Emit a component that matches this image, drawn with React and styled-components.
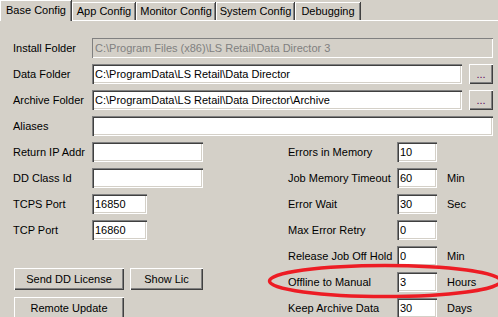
import React from "react";
import styled, { createGlobalStyle } from "styled-components";

const TABS = [
  { id: "base", name: "Base Config", width: 71, active: true },
  { id: "app", name: "App Config", width: 63 },
  { id: "monitor", name: "Monitor Config", width: 79 },
  { id: "system", name: "System Config", width: 78 },
  { id: "debug", name: "Debugging", width: 65 },
];

const FOLDERS = [
  { id: "install", label: "Install Folder", value: "C:\\Program Files (x86)\\LS Retail\\Data Director 3", disabled: true },
  { id: "data", label: "Data Folder", value: "C:\\ProgramData\\LS Retail\\Data Director", browse: true },
  { id: "archive", label: "Archive Folder", value: "C:\\ProgramData\\LS Retail\\Data Director\\Archive", browse: true },
  { id: "aliases", label: "Aliases", value: "" },
];

const LEFT_FIELDS = [
  { id: "ip", label: "Return IP Addr", value: "", width: 111 },
  { id: "class", label: "DD Class Id", value: "", width: 111 },
  { id: "tcps", label: "TCPS Port", value: "16850", width: 55 },
  { id: "tcp", label: "TCP Port", value: "16860", width: 55 },
];

const RIGHT_FIELDS = [
  { id: "errors", label: "Errors in Memory", value: "10" },
  { id: "timeout", label: "Job Memory Timeout", value: "60", unit: "Min" },
  { id: "wait", label: "Error Wait", value: "30", unit: "Sec" },
  { id: "retry", label: "Max Error Retry", value: "0" },
  { id: "release", label: "Release Job Off Hold", value: "0", unit: "Min" },
  { id: "offline", label: "Offline to Manual", value: "3", unit: "Hours", marked: true },
  { id: "keep", label: "Keep Archive Data", value: "30", unit: "Days" },
];

export default function App() {
  return (
    <>
      <GlobalStyle />
      <Window>
        <TabStrip>
          {TABS.map((tab) => (
            <Tab key={tab.id} $active={tab.active} $width={tab.width}>
              {tab.name}
            </Tab>
          ))}
          <TabFiller />
        </TabStrip>

        <Panel>
          <FolderList>
            {FOLDERS.map((f) => (
              <FolderRow key={f.id}>
                <Label>{f.label}</Label>
                <TextBox
                  value={f.value}
                  readOnly
                  disabled={f.disabled}
                  $span={!f.browse}
                />
                {f.browse && <BrowseButton>...</BrowseButton>}
              </FolderRow>
            ))}
          </FolderList>

          <Columns>
            <LeftColumn>
              {LEFT_FIELDS.map((f) => (
                <FieldRow key={f.id}>
                  <Label>{f.label}</Label>
                  <TextBox value={f.value} readOnly $width={f.width} />
                </FieldRow>
              ))}
              <ButtonGrid>
                <PushButton $width={110}>Send DD License</PushButton>
                <PushButton $width={73}>Show Lic</PushButton>
                <PushButton $width={110}>Remote Update</PushButton>
              </ButtonGrid>
            </LeftColumn>

            <RightColumn>
              {RIGHT_FIELDS.map((f) => (
                <SettingRow key={f.id}>
                  <Label>{f.label}</Label>
                  <TextBox value={f.value} readOnly $width={40} />
                  <Unit>{f.unit}</Unit>
                  {f.marked && (
                    <Marker viewBox="0 0 236 36">
                      <ellipse cx="118" cy="18" rx="115.5" ry="15.5" />
                    </Marker>
                  )}
                </SettingRow>
              ))}
            </RightColumn>
          </Columns>
        </Panel>
      </Window>
    </>
  );
}

const GlobalStyle = createGlobalStyle`
  html, body {
    margin: 0;
    background: #d4d0c8;
    overflow: hidden;
  }
  body {
    font-family: "Liberation Sans", Arial, sans-serif;
    font-size: 11px;
    color: #000;
  }
`;

const Window = styled.div`
  width: 498px;
  height: 317px;
  background: #d4d0c8;
  overflow: hidden;
`;

const TabStrip = styled.div`
  display: flex;
  align-items: flex-end;
  height: 21px;
`;

const Tab = styled.div`
  box-sizing: border-box;
  width: ${(p) => p.$width}px;
  height: ${(p) => (p.$active ? 21 : 18)}px;
  margin-bottom: ${(p) => (p.$active ? 0 : 1)}px;
  padding-top: ${(p) => (p.$active ? 3 : 2)}px;
  text-align: center;
  background: #d4d0c8;
  border-top: 1px solid #fff;
  border-left: 1px solid #fff;
  box-shadow: inset -1px 0 #808080, 1px 0 #404040;
  white-space: nowrap;
  position: relative;
  ${(p) =>
    !p.$active &&
    `&::after {
      content: "";
      position: absolute;
      left: -1px;
      right: -1px;
      bottom: -1px;
      height: 1px;
      background: #fff;
    }`}
  & + & {
    margin-left: 1px;
  }
`;

const TabFiller = styled.div`
  flex: 1;
  height: 1px;
  background: #fff;
`;

const Panel = styled.div`
  padding: 17px 5px 0 13px;
  display: flex;
  flex-direction: column;
  gap: 6px;
`;

const FolderList = styled.div`
  display: flex;
  flex-direction: column;
  gap: 6px;
`;

const FolderRow = styled.div`
  display: grid;
  grid-template-columns: 79px 1fr auto;
  height: 20px;
  align-items: center;
`;

const Label = styled.span`
  white-space: nowrap;
`;

const TextBox = styled.input`
  box-sizing: border-box;
  height: 20px;
  width: ${(p) => (p.$width ? `${p.$width}px` : "100%")};
  ${(p) => p.$span && "grid-column: 2 / 4;"}
  margin: 0;
  padding: 0 3px;
  border: none;
  outline: none;
  font: inherit;
  color: #000;
  background: #fff;
  box-shadow: inset 1px 1px #808080, inset 2px 2px #404040,
    inset -1px -1px #fff, inset -2px -2px #d4d0c8;

  &:disabled {
    background: #d4d0c8;
    color: #808080;
    box-shadow: inset 1px 1px #808080, inset -1px -1px #fff;
  }
`;

const ButtonBase = styled.button`
  box-sizing: border-box;
  margin: 0;
  padding: 0;
  border: none;
  font: inherit;
  color: #000;
  background: #d4d0c8;
  box-shadow: inset 1px 1px #fff, inset -1px -1px #404040,
    inset -2px -2px #808080;
`;

const BrowseButton = styled(ButtonBase)`
  height: 20px;
  width: 24px;
  margin-left: 7px;
  color: #5a0a5a;
  line-height: 14px;
`;

const PushButton = styled(ButtonBase)`
  height: 22px;
  width: ${(p) => p.$width}px;
`;

const Columns = styled.div`
  display: grid;
  grid-template-columns: 275px 1fr;
`;

const LeftColumn = styled.div`
  display: flex;
  flex-direction: column;
  gap: 6px;
`;

const FieldRow = styled.div`
  display: grid;
  grid-template-columns: 79px auto;
  height: 20px;
  align-items: center;
`;

const ButtonGrid = styled.div`
  display: grid;
  grid-template-columns: 110px 73px;
  column-gap: 6px;
  row-gap: 7px;
  margin: 22px 0 0 1px;
`;

const RightColumn = styled.div`
  display: flex;
  flex-direction: column;
  gap: 6px;
`;

const SettingRow = styled.div`
  position: relative;
  display: grid;
  grid-template-columns: 109px 40px auto;
  height: 20px;
  align-items: center;
`;

const Unit = styled.span`
  padding-left: 10px;
`;

const Marker = styled.svg`
  position: absolute;
  left: -21px;
  top: -9px;
  width: 236px;
  height: 36px;
  overflow: visible;
  pointer-events: none;

  ellipse {
    fill: none;
    stroke: #ed1c24;
    stroke-width: 3.5;
  }
`;
